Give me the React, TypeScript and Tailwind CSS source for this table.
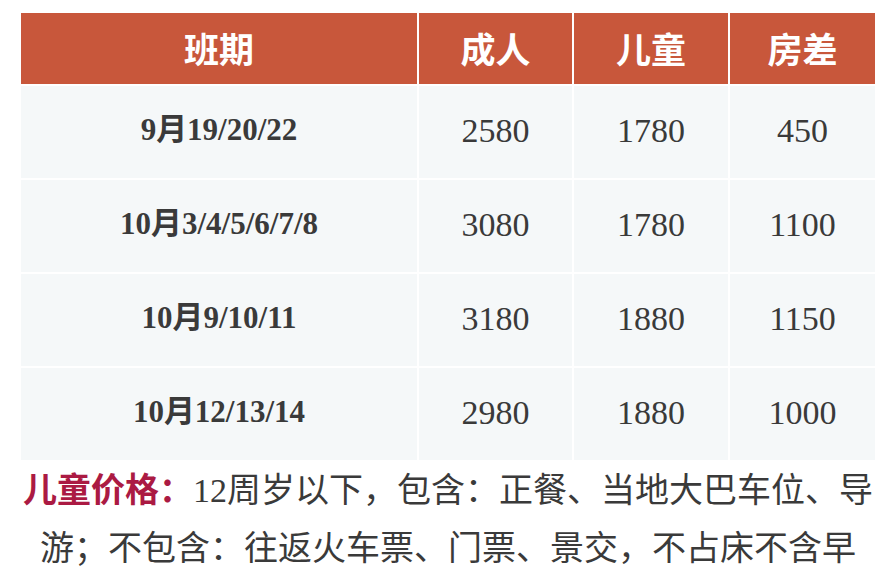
import React from 'react';

const rows = [
  { date: '9月19/20/22', adult: '2580', child: '1780', room: '450' },
  { date: '10月3/4/5/6/7/8', adult: '3080', child: '1780', room: '1100' },
  { date: '10月9/10/11', adult: '3180', child: '1880', room: '1150' },
  { date: '10月12/13/14', adult: '2980', child: '1880', room: '1000' },
];

const serif = "font-['Liberation_Serif','Noto_Sans_CJK_SC',serif]";

export default function App() {
  return (
    <div className="w-[892px] h-[570px] bg-white pl-[21px] pt-[13px] overflow-hidden">
      <div className="w-[854px]">
        {/* Price table */}
        <div className="grid grid-cols-[396px_153px_154px_145px] gap-[2px] bg-white">
          {['班期', '成人', '儿童', '房差'].map((h) => (
            <div
              key={h}
              className="h-[71px] bg-[#c8573b] flex items-center justify-center text-white font-bold text-[35px] font-['Noto_Sans_CJK_SC',sans-serif]"
            >
              {h}
            </div>
          ))}
          {rows.map((r) => (
            <React.Fragment key={r.date}>
              <div className={`h-[92px] bg-[#f5f8f9] flex items-center justify-center text-[#3a3a3a] font-bold text-[31px] pb-[3px] ${serif}`}>
                {r.date}
              </div>
              <div className={`h-[92px] bg-[#f5f8f9] flex items-center justify-center text-[#3a3a3a] text-[34px] pb-[3px] ${serif}`}>
                {r.adult}
              </div>
              <div className={`h-[92px] bg-[#f5f8f9] flex items-center justify-center text-[#3a3a3a] text-[34px] pb-[3px] ${serif}`}>
                {r.child}
              </div>
              <div className={`h-[92px] bg-[#f5f8f9] flex items-center justify-center text-[#3a3a3a] text-[34px] pb-[3px] ${serif}`}>
                {r.room}
              </div>
            </React.Fragment>
          ))}
        </div>

        {/* Note */}
        <p className={`text-center text-[34px] leading-[55px] text-[#3a3a3a] whitespace-nowrap ${serif}`}>
          <span className="font-bold text-[#ab1a43] font-['Noto_Sans_CJK_SC',sans-serif]">儿童价格：</span>
          12<span className="font-['Noto_Sans_CJK_SC',sans-serif]">周岁以下，包含：正餐、当地大巴车位、导</span>
          <br />
          <span className="font-['Noto_Sans_CJK_SC',sans-serif]">游；不包含：往返火车票、门票、景交，不占床不含早</span>
        </p>
      </div>
    </div>
  );
}
